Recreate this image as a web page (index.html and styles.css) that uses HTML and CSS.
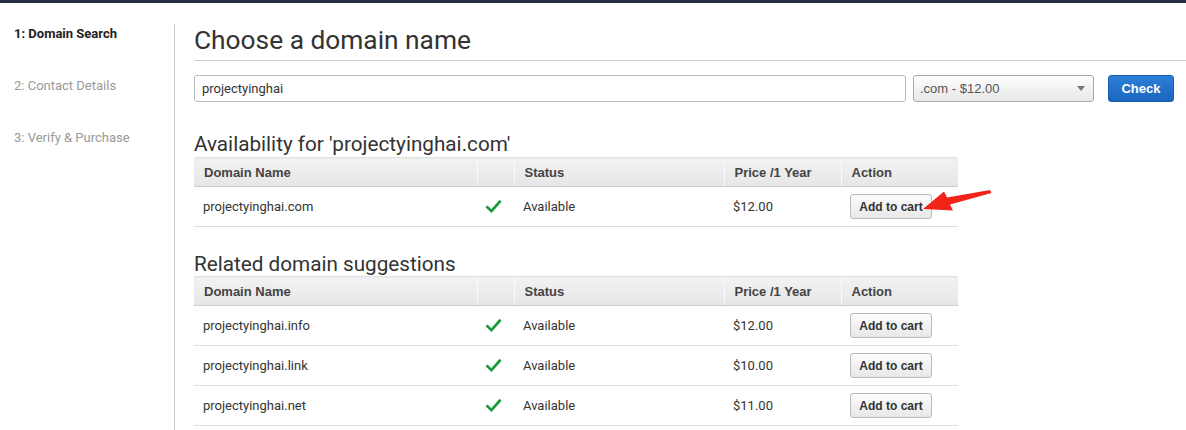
FILE: index.html
```html
<!DOCTYPE html>
<html>
<head>
<meta charset="utf-8">
<link rel="stylesheet" href="styles.css">
</head>
<body>
<div class="topbar"></div>
<div class="page">
  <nav class="sidebar">
    <div class="step active">1: Domain Search</div>
    <div class="step">2: Contact Details</div>
    <div class="step">3: Verify &amp; Purchase</div>
  </nav>
  <main class="main">
    <h1 class="title">Choose a domain name</h1>
    <div class="search">
      <div class="input">projectyinghai</div>
      <div class="select"><span>.com - $12.00</span><span class="caret"></span></div>
      <button class="check">Check</button>
    </div>

    <h2 class="subtitle">Availability for 'projectyinghai.com'</h2>
    <div class="tablewrap">
      <table class="domains">
        <thead>
          <tr><th class="c-name">Domain Name</th><th class="c-ok"></th><th class="c-status">Status</th><th class="c-price">Price /1 Year</th><th class="c-action">Action</th></tr>
        </thead>
        <tbody>
          <tr><td>projectyinghai.com</td><td class="ok"><svg width="17" height="15" viewBox="0 0 17 15"><path d="M0.5 8.3 L6.5 14 L16.5 2.8 L14.6 0.8 L6.3 10.2 L2.6 6.4 Z" fill="#17993a"/></svg></td><td>Available</td><td>$12.00</td><td><button class="cart">Add to cart</button></td></tr>
        </tbody>
      </table>
      <svg class="arrow" width="80" height="40" viewBox="0 0 80 40"><path d="M70 2 L71.5 5 L30 16.5 L33 22.5 L3 21 L24 3.5 L27 9.5 Z" fill="#f2241a"/></svg>
    </div>

    <h2 class="subtitle second">Related domain suggestions</h2>
    <table class="domains">
      <thead>
        <tr><th class="c-name">Domain Name</th><th class="c-ok"></th><th class="c-status">Status</th><th class="c-price">Price /1 Year</th><th class="c-action">Action</th></tr>
      </thead>
      <tbody>
        <tr><td>projectyinghai.info</td><td class="ok"><svg width="17" height="15" viewBox="0 0 17 15"><path d="M0.5 8.3 L6.5 14 L16.5 2.8 L14.6 0.8 L6.3 10.2 L2.6 6.4 Z" fill="#17993a"/></svg></td><td>Available</td><td>$12.00</td><td><button class="cart">Add to cart</button></td></tr>
        <tr><td>projectyinghai.link</td><td class="ok"><svg width="17" height="15" viewBox="0 0 17 15"><path d="M0.5 8.3 L6.5 14 L16.5 2.8 L14.6 0.8 L6.3 10.2 L2.6 6.4 Z" fill="#17993a"/></svg></td><td>Available</td><td>$10.00</td><td><button class="cart">Add to cart</button></td></tr>
        <tr><td>projectyinghai.net</td><td class="ok"><svg width="17" height="15" viewBox="0 0 17 15"><path d="M0.5 8.3 L6.5 14 L16.5 2.8 L14.6 0.8 L6.3 10.2 L2.6 6.4 Z" fill="#17993a"/></svg></td><td>Available</td><td>$11.00</td><td><button class="cart">Add to cart</button></td></tr>
      </tbody>
    </table>
  </main>
</div>
</body>
</html>
```
FILE: styles.css
```css
* { box-sizing: border-box; }
html, body { margin: 0; padding: 0; background: #fff; }
body {
  font-family: Roboto, "Liberation Sans", Arial, sans-serif;
  font-size: 13px;
  color: #333;
  overflow: hidden;
  height: 430px;
}
.topbar { height: 3px; background: #232f3e; }
.page { display: flex; margin-top: 21px; }
.sidebar {
  width: 175px;
  flex: 0 0 175px;
  border-right: 1px solid #ccc;
  padding: 2px 0 0 14px;
  min-height: 420px;
}
.step { height: 52px; line-height: 16px; color: #999; font-size: 13px; }
.step.active { color: #222; font-weight: 700; }
.main { flex: 1; padding-left: 19px; }
.title {
  margin: 0;
  font-size: 26.3px;
  font-weight: 400;
  line-height: 32px;
  color: #333;
  padding-bottom: 4px;
  border-bottom: 1px solid #ccc;
}
.search { display: flex; margin-top: 14px; height: 27px; }
.input {
  width: 712px;
  height: 27px;
  border: 1px solid #bbb;
  border-radius: 3px;
  padding: 0 7px;
  line-height: 25px;
  font-size: 13px;
  color: #333;
}
.select {
  width: 181px;
  margin-left: 7px;
  height: 27px;
  border: 1px solid #aaa;
  border-radius: 3px;
  background: linear-gradient(#fff, #f0f0f0 60%, #e8e8e8);
  display: flex;
  align-items: center;
  justify-content: space-between;
  padding: 0 8px 0 6px;
  font-family: "Liberation Sans", Arial, sans-serif;
  font-size: 13px;
  color: #555;
}
.caret {
  width: 0; height: 0;
  border-left: 4px solid transparent;
  border-right: 4px solid transparent;
  border-top: 5px solid #777;
}
.check {
  margin-left: 14px;
  width: 66px;
  height: 27px;
  border: 1px solid #1a5fae;
  border-radius: 3px;
  background: linear-gradient(#2e7fd6, #1a66bf);
  color: #fff;
  font-family: "Liberation Sans", Arial, sans-serif;
  font-weight: 700;
  font-size: 13px;
  padding: 0;
}
.subtitle {
  margin: 30px 0 1px;
  font-size: 20.7px;
  font-weight: 400;
  line-height: 24px;
  color: #333;
}
.subtitle.second { margin-top: 25px; margin-bottom: 0; }
.tablewrap { position: relative; width: 764px; }
.arrow { position: absolute; left: 726px; top: 31px; }
.domains { border-collapse: collapse; width: 764px; table-layout: fixed; }
.domains th {
  height: 29px;
  padding: 0 10px;
  text-align: left;
  font-family: "Liberation Sans", Arial, sans-serif;
  font-weight: 700;
  font-size: 13px;
  color: #444;
  background: linear-gradient(#f2f2f2, #e6e6e6);
  border-bottom: 1px solid #ccc;
  border-left: 1px solid #fafafa;
  border-top: 1px solid #e2e2e2;
}
.domains th:first-child { border-left: none; }
.c-name { width: 283px; }
.c-ok { width: 37px; }
.c-status { width: 210px; }
.c-price { width: 117px; }
.c-action { width: 117px; }
.domains td {
  height: 40px;
  padding: 0 9px;
  border-bottom: 1px solid #ddd;
  color: #333;
  font-size: 13px;
}
.domains td.ok { padding: 3px 0 0 8px; }
.cart {
  width: 82px;
  height: 25px;
  margin-left: 0;
  border: 1px solid #bbb;
  border-radius: 3px;
  background: linear-gradient(#fcfcfc, #e8e8e8);
  font-family: "Liberation Sans", Arial, sans-serif;
  font-weight: 700;
  font-size: 12px;
  color: #333;
  padding: 0;
}
```
